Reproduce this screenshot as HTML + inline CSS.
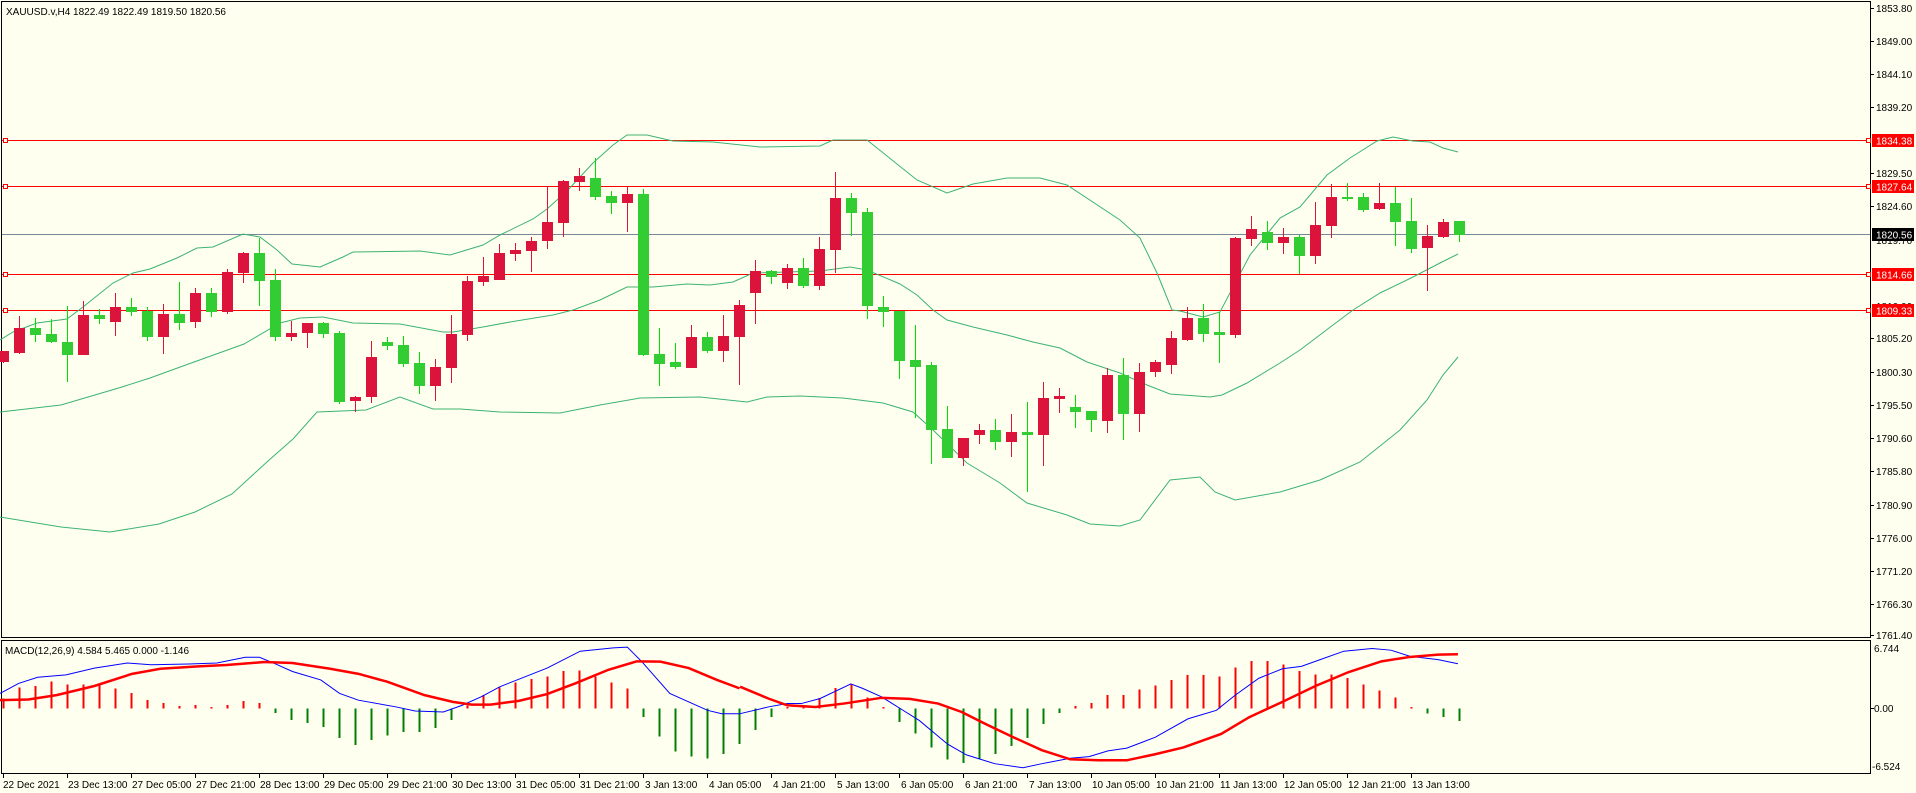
<!DOCTYPE html>
<html><head><meta charset="utf-8"><style>
html,body{margin:0;padding:0;background:#fffff0;width:1916px;height:793px;overflow:hidden}
svg{display:block}
text{font-family:"Liberation Sans",sans-serif;font-size:10px;fill:#000}
.r{fill:#dc143c}.g{fill:#32cd32}
.rw{stroke:#dc143c}.gw{stroke:#00e000}
</style></head><body>
<svg width="1916" height="793" viewBox="0 0 1916 793" xmlns="http://www.w3.org/2000/svg">
<rect width="1916" height="793" fill="#fffff0"/>
<g stroke="#000" stroke-width="1" fill="none" shape-rendering="crispEdges">
<rect x="1.5" y="1.5" width="1869" height="636"/>
<rect x="1.5" y="640.5" width="1869" height="133"/>
</g>
<g stroke="#ff0000" stroke-width="1" shape-rendering="crispEdges">
<line x1="2" x2="1870" y1="140.5" y2="140.5"/>
<line x1="2" x2="1870" y1="186.5" y2="186.5"/>
<line x1="2" x2="1870" y1="274.5" y2="274.5"/>
<line x1="2" x2="1870" y1="310.5" y2="310.5"/>
</g>
<line x1="2" x2="1870" y1="234.5" y2="234.5" stroke="#778899" shape-rendering="crispEdges"/>
<g stroke="#ff0000" fill="#fffff0" shape-rendering="crispEdges">
<rect x="3.5" y="138.5" width="4" height="4"/><rect x="3.5" y="184.5" width="4" height="4"/><rect x="3.5" y="272.5" width="4" height="4"/><rect x="3.5" y="308.5" width="4" height="4"/>
<rect x="1866.5" y="138.5" width="4" height="4"/><rect x="1866.5" y="184.5" width="4" height="4"/><rect x="1866.5" y="272.5" width="4" height="4"/><rect x="1866.5" y="308.5" width="4" height="4"/>
</g>
<g fill="none" stroke="#3cb371" stroke-width="1">
<polyline points="0,340 13,332 37,323 67,319 83,307 113,283 133,273 150,269 177,258 197,248 213,247 243,234 260,237 277,250 292,264 320,267 343,257 353,252 420,251 450,255 483,245 500,235 533,219 547,209 567,191 593,163 613,145 627,135 647,135 673,141 713,142 760,147 820,146 833,140 867,140 917,180 947,193 973,184 1007,178 1040,178 1067,185 1120,220 1140,238 1157,273 1172,310 1180,311 1203,317 1220,312 1250,255 1280,218 1300,207 1327,175 1350,158 1377,141 1393,137 1413,141 1430,142 1443,148 1458,152"/>
<polyline points="0,412 61,405 122,387 150,378 183,366 244,344 280,323 300,318 323,317 353,323 400,324 443,332 453,332 483,327 510,322 553,315 573,310 600,300 627,287 653,287 687,284 710,285 733,282 753,273 820,271 850,267 867,270 900,284 917,295 933,310 947,320 973,327 1007,335 1033,342 1060,348 1087,362 1120,373 1147,385 1170,394 1210,397 1222,395 1247,383 1280,363 1300,350 1333,325 1353,310 1380,293 1413,277 1440,263 1458,254"/>
<polyline points="0,517 61,527 110,532 159,524 195,512 232,494 268,461 293,439 317,412 366,410 400,397 433,409 460,409 500,412 560,413 600,405 640,398 700,397 747,402 767,397 800,396 843,398 883,403 913,412 933,430 967,463 1000,483 1027,503 1067,515 1090,524 1120,526 1140,520 1170,480 1200,477 1215,492 1235,500 1280,492 1320,480 1360,462 1400,430 1427,400 1443,375 1458,357"/>
</g>
<g shape-rendering="crispEdges">
<line class="rw" x1="3.5" x2="3.5" y1="351" y2="363"/><rect class="r" x="0" y="351" width="9" height="11"/>
<line class="rw" x1="19.5" x2="19.5" y1="316" y2="354"/><rect class="r" x="14" y="328" width="11" height="25"/>
<line class="gw" x1="35.5" x2="35.5" y1="318" y2="342"/><rect class="g" x="30" y="328" width="11" height="7"/>
<line class="gw" x1="51.5" x2="51.5" y1="319" y2="343"/><rect class="g" x="46" y="334" width="11" height="8"/>
<line class="gw" x1="67.5" x2="67.5" y1="306" y2="382"/><rect class="g" x="62" y="342" width="11" height="13"/>
<line class="rw" x1="83.5" x2="83.5" y1="301" y2="355"/><rect class="r" x="78" y="315" width="11" height="40"/>
<line class="gw" x1="99.5" x2="99.5" y1="309" y2="324"/><rect class="g" x="94" y="315" width="11" height="4"/>
<line class="rw" x1="115.5" x2="115.5" y1="293" y2="336"/><rect class="r" x="110" y="307" width="11" height="15"/>
<line class="gw" x1="131.5" x2="131.5" y1="298" y2="316"/><rect class="g" x="126" y="307" width="11" height="5"/>
<line class="gw" x1="147.5" x2="147.5" y1="307" y2="341"/><rect class="g" x="142" y="311" width="11" height="26"/>
<line class="rw" x1="163.5" x2="163.5" y1="304" y2="354"/><rect class="r" x="158" y="314" width="11" height="23"/>
<line class="gw" x1="179.5" x2="179.5" y1="282" y2="330"/><rect class="g" x="174" y="314" width="11" height="9"/>
<line class="rw" x1="195.5" x2="195.5" y1="288" y2="328"/><rect class="r" x="190" y="293" width="11" height="29"/>
<line class="gw" x1="211.5" x2="211.5" y1="288" y2="317"/><rect class="g" x="206" y="293" width="11" height="19"/>
<line class="rw" x1="227.5" x2="227.5" y1="269" y2="314"/><rect class="r" x="222" y="272" width="11" height="40"/>
<line class="rw" x1="243.5" x2="243.5" y1="252" y2="283"/><rect class="r" x="238" y="253" width="11" height="20"/>
<line class="gw" x1="259.5" x2="259.5" y1="238" y2="306"/><rect class="g" x="254" y="253" width="11" height="28"/>
<line class="gw" x1="275.5" x2="275.5" y1="269" y2="341"/><rect class="g" x="270" y="280" width="11" height="57"/>
<line class="rw" x1="291.5" x2="291.5" y1="321" y2="341"/><rect class="r" x="286" y="333" width="11" height="4"/>
<line class="rw" x1="307.5" x2="307.5" y1="323" y2="348"/><rect class="r" x="302" y="323" width="11" height="10"/>
<line class="gw" x1="323.5" x2="323.5" y1="322" y2="338"/><rect class="g" x="318" y="323" width="11" height="11"/>
<line class="gw" x1="339.5" x2="339.5" y1="331" y2="404"/><rect class="g" x="334" y="333" width="11" height="69"/>
<line class="rw" x1="355.5" x2="355.5" y1="396" y2="412"/><rect class="r" x="350" y="397" width="11" height="4"/>
<line class="rw" x1="371.5" x2="371.5" y1="341" y2="403"/><rect class="r" x="366" y="357" width="11" height="40"/>
<line class="gw" x1="387.5" x2="387.5" y1="337" y2="350"/><rect class="g" x="382" y="342" width="11" height="4"/>
<line class="gw" x1="403.5" x2="403.5" y1="336" y2="367"/><rect class="g" x="398" y="345" width="11" height="19"/>
<line class="gw" x1="419.5" x2="419.5" y1="352" y2="394"/><rect class="g" x="414" y="363" width="11" height="23"/>
<line class="rw" x1="435.5" x2="435.5" y1="359" y2="401"/><rect class="r" x="430" y="367" width="11" height="19"/>
<line class="rw" x1="451.5" x2="451.5" y1="315" y2="383"/><rect class="r" x="446" y="334" width="11" height="34"/>
<line class="rw" x1="467.5" x2="467.5" y1="276" y2="341"/><rect class="r" x="462" y="281" width="11" height="54"/>
<line class="rw" x1="483.5" x2="483.5" y1="257" y2="286"/><rect class="r" x="478" y="276" width="11" height="6"/>
<line class="rw" x1="499.5" x2="499.5" y1="244" y2="280"/><rect class="r" x="494" y="253" width="11" height="27"/>
<line class="rw" x1="515.5" x2="515.5" y1="243" y2="261"/><rect class="r" x="510" y="250" width="11" height="4"/>
<line class="rw" x1="531.5" x2="531.5" y1="237" y2="272"/><rect class="r" x="526" y="241" width="11" height="10"/>
<line class="rw" x1="547.5" x2="547.5" y1="187" y2="249"/><rect class="r" x="542" y="222" width="11" height="19"/>
<line class="rw" x1="563.5" x2="563.5" y1="180" y2="237"/><rect class="r" x="558" y="181" width="11" height="42"/>
<line class="rw" x1="579.5" x2="579.5" y1="168" y2="191"/><rect class="r" x="574" y="176" width="11" height="6"/>
<line class="gw" x1="595.5" x2="595.5" y1="158" y2="200"/><rect class="g" x="590" y="178" width="11" height="19"/>
<line class="gw" x1="611.5" x2="611.5" y1="191" y2="214"/><rect class="g" x="606" y="196" width="11" height="7"/>
<line class="rw" x1="627.5" x2="627.5" y1="187" y2="232"/><rect class="r" x="622" y="194" width="11" height="9"/>
<line class="gw" x1="643.5" x2="643.5" y1="189" y2="356"/><rect class="g" x="638" y="194" width="11" height="161"/>
<line class="gw" x1="659.5" x2="659.5" y1="328" y2="386"/><rect class="g" x="654" y="354" width="11" height="10"/>
<line class="gw" x1="675.5" x2="675.5" y1="343" y2="369"/><rect class="g" x="670" y="362" width="11" height="5"/>
<line class="rw" x1="691.5" x2="691.5" y1="325" y2="368"/><rect class="r" x="686" y="337" width="11" height="31"/>
<line class="gw" x1="707.5" x2="707.5" y1="332" y2="353"/><rect class="g" x="702" y="337" width="11" height="14"/>
<line class="rw" x1="723.5" x2="723.5" y1="315" y2="362"/><rect class="r" x="718" y="336" width="11" height="15"/>
<line class="rw" x1="739.5" x2="739.5" y1="300" y2="385"/><rect class="r" x="734" y="305" width="11" height="32"/>
<line class="rw" x1="755.5" x2="755.5" y1="260" y2="324"/><rect class="r" x="750" y="271" width="11" height="22"/>
<line class="gw" x1="771.5" x2="771.5" y1="270" y2="284"/><rect class="g" x="766" y="271" width="11" height="6"/>
<line class="rw" x1="787.5" x2="787.5" y1="264" y2="289"/><rect class="r" x="782" y="268" width="11" height="15"/>
<line class="gw" x1="803.5" x2="803.5" y1="258" y2="288"/><rect class="g" x="798" y="268" width="11" height="18"/>
<line class="rw" x1="819.5" x2="819.5" y1="237" y2="290"/><rect class="r" x="814" y="249" width="11" height="37"/>
<line class="rw" x1="835.5" x2="835.5" y1="172" y2="273"/><rect class="r" x="830" y="198" width="11" height="52"/>
<line class="gw" x1="851.5" x2="851.5" y1="193" y2="236"/><rect class="g" x="846" y="198" width="11" height="15"/>
<line class="gw" x1="867.5" x2="867.5" y1="208" y2="319"/><rect class="g" x="862" y="212" width="11" height="94"/>
<line class="gw" x1="883.5" x2="883.5" y1="296" y2="327"/><rect class="g" x="878" y="307" width="11" height="5"/>
<line class="gw" x1="899.5" x2="899.5" y1="311" y2="379"/><rect class="g" x="894" y="311" width="11" height="50"/>
<line class="gw" x1="915.5" x2="915.5" y1="325" y2="418"/><rect class="g" x="910" y="360" width="11" height="7"/>
<line class="gw" x1="931.5" x2="931.5" y1="362" y2="464"/><rect class="g" x="926" y="365" width="11" height="65"/>
<line class="gw" x1="947.5" x2="947.5" y1="406" y2="458"/><rect class="g" x="942" y="429" width="11" height="29"/>
<line class="rw" x1="963.5" x2="963.5" y1="438" y2="466"/><rect class="r" x="958" y="438" width="11" height="20"/>
<line class="rw" x1="979.5" x2="979.5" y1="424" y2="444"/><rect class="r" x="974" y="430" width="11" height="5"/>
<line class="gw" x1="995.5" x2="995.5" y1="419" y2="450"/><rect class="g" x="990" y="430" width="11" height="12"/>
<line class="rw" x1="1011.5" x2="1011.5" y1="414" y2="457"/><rect class="r" x="1006" y="432" width="11" height="10"/>
<line class="gw" x1="1027.5" x2="1027.5" y1="402" y2="492"/><rect class="g" x="1022" y="432" width="11" height="3"/>
<line class="rw" x1="1043.5" x2="1043.5" y1="382" y2="466"/><rect class="r" x="1038" y="398" width="11" height="37"/>
<line class="rw" x1="1059.5" x2="1059.5" y1="388" y2="413"/><rect class="r" x="1054" y="396" width="11" height="3"/>
<line class="gw" x1="1075.5" x2="1075.5" y1="395" y2="428"/><rect class="g" x="1070" y="407" width="11" height="5"/>
<line class="gw" x1="1091.5" x2="1091.5" y1="411" y2="432"/><rect class="g" x="1086" y="411" width="11" height="9"/>
<line class="rw" x1="1107.5" x2="1107.5" y1="368" y2="433"/><rect class="r" x="1102" y="375" width="11" height="46"/>
<line class="gw" x1="1123.5" x2="1123.5" y1="358" y2="440"/><rect class="g" x="1118" y="375" width="11" height="39"/>
<line class="rw" x1="1139.5" x2="1139.5" y1="363" y2="432"/><rect class="r" x="1134" y="372" width="11" height="42"/>
<line class="rw" x1="1155.5" x2="1155.5" y1="360" y2="377"/><rect class="r" x="1150" y="362" width="11" height="10"/>
<line class="rw" x1="1171.5" x2="1171.5" y1="331" y2="374"/><rect class="r" x="1166" y="338" width="11" height="27"/>
<line class="rw" x1="1187.5" x2="1187.5" y1="307" y2="341"/><rect class="r" x="1182" y="318" width="11" height="22"/>
<line class="gw" x1="1203.5" x2="1203.5" y1="304" y2="342"/><rect class="g" x="1198" y="318" width="11" height="16"/>
<line class="gw" x1="1219.5" x2="1219.5" y1="312" y2="363"/><rect class="g" x="1214" y="332" width="11" height="3"/>
<line class="rw" x1="1235.5" x2="1235.5" y1="237" y2="338"/><rect class="r" x="1230" y="238" width="11" height="97"/>
<line class="rw" x1="1251.5" x2="1251.5" y1="216" y2="246"/><rect class="r" x="1246" y="229" width="11" height="10"/>
<line class="gw" x1="1267.5" x2="1267.5" y1="221" y2="250"/><rect class="g" x="1262" y="232" width="11" height="11"/>
<line class="rw" x1="1283.5" x2="1283.5" y1="228" y2="254"/><rect class="r" x="1278" y="237" width="11" height="6"/>
<line class="gw" x1="1299.5" x2="1299.5" y1="235" y2="274"/><rect class="g" x="1294" y="237" width="11" height="19"/>
<line class="rw" x1="1315.5" x2="1315.5" y1="202" y2="264"/><rect class="r" x="1310" y="225" width="11" height="31"/>
<line class="rw" x1="1331.5" x2="1331.5" y1="184" y2="238"/><rect class="r" x="1326" y="197" width="11" height="29"/>
<line class="gw" x1="1347.5" x2="1347.5" y1="183" y2="201"/><rect class="g" x="1342" y="197" width="11" height="2"/>
<line class="gw" x1="1363.5" x2="1363.5" y1="193" y2="212"/><rect class="g" x="1358" y="197" width="11" height="13"/>
<line class="rw" x1="1379.5" x2="1379.5" y1="183" y2="210"/><rect class="r" x="1374" y="203" width="11" height="6"/>
<line class="gw" x1="1395.5" x2="1395.5" y1="187" y2="246"/><rect class="g" x="1390" y="203" width="11" height="19"/>
<line class="gw" x1="1411.5" x2="1411.5" y1="198" y2="253"/><rect class="g" x="1406" y="221" width="11" height="28"/>
<line class="rw" x1="1427.5" x2="1427.5" y1="225" y2="291"/><rect class="r" x="1422" y="236" width="11" height="12"/>
<line class="rw" x1="1443.5" x2="1443.5" y1="219" y2="238"/><rect class="r" x="1438" y="222" width="11" height="15"/>
<line class="gw" x1="1459.5" x2="1459.5" y1="221" y2="242"/><rect class="g" x="1454" y="221" width="11" height="14"/>
</g>
<g stroke-width="2" shape-rendering="crispEdges">
<g stroke="#ff0000">
<line x1="3.5" x2="3.5" y1="708.5" y2="698.5"/><line x1="19.5" x2="19.5" y1="708.5" y2="687.4"/><line x1="35.5" x2="35.5" y1="708.5" y2="686"/><line x1="51.5" x2="51.5" y1="708.5" y2="681.6"/><line x1="67.5" x2="67.5" y1="708.5" y2="684.6"/><line x1="83.5" x2="83.5" y1="708.5" y2="684.6"/><line x1="99.5" x2="99.5" y1="708.5" y2="685"/><line x1="115.5" x2="115.5" y1="708.5" y2="688.7"/><line x1="131.5" x2="131.5" y1="708.5" y2="692.8"/><line x1="147.5" x2="147.5" y1="708.5" y2="699.9"/><line x1="163.5" x2="163.5" y1="708.5" y2="702.9"/><line x1="179.5" x2="179.5" y1="708.5" y2="705.9"/><line x1="195.5" x2="195.5" y1="708.5" y2="704.9"/><line x1="211.5" x2="211.5" y1="708.5" y2="707"/><line x1="227.5" x2="227.5" y1="708.5" y2="704.9"/><line x1="243.5" x2="243.5" y1="708.5" y2="700.9"/><line x1="259.5" x2="259.5" y1="708.5" y2="702.9"/>
<line x1="467.5" x2="467.5" y1="708.5" y2="705.3"/><line x1="483.5" x2="483.5" y1="708.5" y2="695.1"/><line x1="499.5" x2="499.5" y1="708.5" y2="687.4"/><line x1="515.5" x2="515.5" y1="708.5" y2="682.3"/><line x1="531.5" x2="531.5" y1="708.5" y2="678.9"/><line x1="547.5" x2="547.5" y1="708.5" y2="676.5"/><line x1="563.5" x2="563.5" y1="708.5" y2="671.1"/><line x1="579.5" x2="579.5" y1="708.5" y2="670.5"/><line x1="595.5" x2="595.5" y1="708.5" y2="676.5"/><line x1="611.5" x2="611.5" y1="708.5" y2="682.3"/><line x1="627.5" x2="627.5" y1="708.5" y2="688.7"/>
<line x1="787.5" x2="787.5" y1="708.5" y2="706.9"/><line x1="803.5" x2="803.5" y1="708.5" y2="705.6"/><line x1="819.5" x2="819.5" y1="708.5" y2="698.2"/><line x1="835.5" x2="835.5" y1="708.5" y2="688"/><line x1="851.5" x2="851.5" y1="708.5" y2="684"/><line x1="867.5" x2="867.5" y1="708.5" y2="697.5"/><line x1="883.5" x2="883.5" y1="708.5" y2="706.9"/>
<line x1="1075.5" x2="1075.5" y1="708.5" y2="705.9"/><line x1="1091.5" x2="1091.5" y1="708.5" y2="702.9"/><line x1="1107.5" x2="1107.5" y1="708.5" y2="694.8"/><line x1="1123.5" x2="1123.5" y1="708.5" y2="694.8"/><line x1="1139.5" x2="1139.5" y1="708.5" y2="689.4"/><line x1="1155.5" x2="1155.5" y1="708.5" y2="685.7"/><line x1="1171.5" x2="1171.5" y1="708.5" y2="679.9"/><line x1="1187.5" x2="1187.5" y1="708.5" y2="675.2"/><line x1="1203.5" x2="1203.5" y1="708.5" y2="675.2"/><line x1="1219.5" x2="1219.5" y1="708.5" y2="676.5"/><line x1="1235.5" x2="1235.5" y1="708.5" y2="667.4"/><line x1="1251.5" x2="1251.5" y1="708.5" y2="661"/><line x1="1267.5" x2="1267.5" y1="708.5" y2="661"/><line x1="1283.5" x2="1283.5" y1="708.5" y2="664.4"/><line x1="1299.5" x2="1299.5" y1="708.5" y2="671.1"/><line x1="1315.5" x2="1315.5" y1="708.5" y2="674.5"/><line x1="1331.5" x2="1331.5" y1="708.5" y2="674.5"/><line x1="1347.5" x2="1347.5" y1="708.5" y2="678.2"/><line x1="1363.5" x2="1363.5" y1="708.5" y2="684.6"/><line x1="1379.5" x2="1379.5" y1="708.5" y2="690.7"/><line x1="1395.5" x2="1395.5" y1="708.5" y2="697.5"/><line x1="1411.5" x2="1411.5" y1="708.5" y2="706.9"/>
</g>
<g stroke="#008000">
<line x1="275.5" x2="275.5" y1="708.5" y2="713"/><line x1="291.5" x2="291.5" y1="708.5" y2="719.8"/><line x1="307.5" x2="307.5" y1="708.5" y2="723.2"/><line x1="323.5" x2="323.5" y1="708.5" y2="727.2"/><line x1="339.5" x2="339.5" y1="708.5" y2="738"/><line x1="355.5" x2="355.5" y1="708.5" y2="745.1"/><line x1="371.5" x2="371.5" y1="708.5" y2="740"/><line x1="387.5" x2="387.5" y1="708.5" y2="735.3"/><line x1="403.5" x2="403.5" y1="708.5" y2="731.9"/><line x1="419.5" x2="419.5" y1="708.5" y2="731.9"/><line x1="435.5" x2="435.5" y1="708.5" y2="727.9"/><line x1="451.5" x2="451.5" y1="708.5" y2="719.8"/>
<line x1="643.5" x2="643.5" y1="708.5" y2="717.1"/><line x1="659.5" x2="659.5" y1="708.5" y2="736.7"/><line x1="675.5" x2="675.5" y1="708.5" y2="751.5"/><line x1="691.5" x2="691.5" y1="708.5" y2="756.3"/><line x1="707.5" x2="707.5" y1="708.5" y2="758.3"/><line x1="723.5" x2="723.5" y1="708.5" y2="754.2"/><line x1="739.5" x2="739.5" y1="708.5" y2="744.1"/><line x1="755.5" x2="755.5" y1="708.5" y2="729.9"/><line x1="771.5" x2="771.5" y1="708.5" y2="717.1"/>
<line x1="899.5" x2="899.5" y1="708.5" y2="721.8"/><line x1="915.5" x2="915.5" y1="708.5" y2="733.3"/><line x1="931.5" x2="931.5" y1="708.5" y2="747.5"/><line x1="947.5" x2="947.5" y1="708.5" y2="759.6"/><line x1="963.5" x2="963.5" y1="708.5" y2="763"/><line x1="979.5" x2="979.5" y1="708.5" y2="759"/><line x1="995.5" x2="995.5" y1="708.5" y2="754.2"/><line x1="1011.5" x2="1011.5" y1="708.5" y2="746.1"/><line x1="1027.5" x2="1027.5" y1="708.5" y2="738"/><line x1="1043.5" x2="1043.5" y1="708.5" y2="723.8"/><line x1="1059.5" x2="1059.5" y1="708.5" y2="713"/>
<line x1="1427.5" x2="1427.5" y1="708.5" y2="713.7"/><line x1="1443.5" x2="1443.5" y1="708.5" y2="717.1"/><line x1="1459.5" x2="1459.5" y1="708.5" y2="721.1"/>
</g>
</g>
<g fill="none" transform="translate(0,636) scale(0.4717,0.3378)">
<polyline vector-effect="non-scaling-stroke" stroke="#0000ff" stroke-width="1" points="0,170 40,140 80,122 140,115 200,95 270,80 320,85 400,83 460,80 520,63 550,63 580,80 620,105 680,130 720,170 760,190 840,210 880,222 940,225 980,205 1020,180 1060,150 1160,95 1230,45 1300,35 1330,33 1360,75 1420,170 1500,220 1530,230 1568,230"/>
<polyline vector-effect="non-scaling-stroke" stroke="#ff0000" stroke-width="2.5" points="0,190 60,188 120,175 200,148 280,112 340,97 420,90 480,86 560,77 620,80 700,97 760,112 820,135 900,175 960,195 1000,203 1040,203 1100,192 1160,172 1220,140 1290,100 1350,75 1400,76 1460,95 1520,130 1568,155"/>
</g>
<g fill="none" transform="translate(740,636) scale(0.4717,0.3378)">
<polyline vector-effect="non-scaling-stroke" stroke="#0000ff" stroke-width="1" points="0,230 60,210 100,200 130,200 170,185 235,142 260,155 300,180 340,215 380,250 440,320 480,352 540,378 600,390 640,378 700,362 740,357 780,340 820,332 880,300 950,245 1010,220 1050,175 1100,125 1150,97 1190,90 1230,70 1280,45 1340,37 1380,42 1420,60 1480,70 1522,82"/>
<polyline vector-effect="non-scaling-stroke" stroke="#ff0000" stroke-width="2.5" points="0,150 60,185 100,205 160,210 220,200 300,183 360,186 420,200 470,225 520,260 580,300 640,338 700,365 760,368 820,368 880,350 940,330 1020,290 1080,240 1150,195 1220,148 1290,107 1360,75 1420,62 1480,55 1522,54"/>
</g>
<text x="6" y="15">XAUUSD.v,H4  1822.49 1822.49 1819.50 1820.56</text>
<text x="5" y="654">MACD(12,26,9) 4.584 5.465 0.000 -1.146</text>
<g stroke="#000" shape-rendering="crispEdges">
<line x1="1870" x2="1874" y1="8.5" y2="8.5"/><line x1="1870" x2="1874" y1="41.5" y2="41.5"/><line x1="1870" x2="1874" y1="74.5" y2="74.5"/><line x1="1870" x2="1874" y1="107.5" y2="107.5"/><line x1="1870" x2="1874" y1="173.5" y2="173.5"/><line x1="1870" x2="1874" y1="206.5" y2="206.5"/><line x1="1870" x2="1874" y1="338.5" y2="338.5"/><line x1="1870" x2="1874" y1="372.5" y2="372.5"/><line x1="1870" x2="1874" y1="405.5" y2="405.5"/><line x1="1870" x2="1874" y1="438.5" y2="438.5"/><line x1="1870" x2="1874" y1="471.5" y2="471.5"/><line x1="1870" x2="1874" y1="505.5" y2="505.5"/><line x1="1870" x2="1874" y1="538.5" y2="538.5"/><line x1="1870" x2="1874" y1="571.5" y2="571.5"/><line x1="1870" x2="1874" y1="604.5" y2="604.5"/><line x1="1870" x2="1874" y1="635.5" y2="635.5"/>
<line x1="1870" x2="1874" y1="708.5" y2="708.5"/>
</g>
<g>
<text x="1876" y="12">1853.80</text><text x="1876" y="45">1849.00</text><text x="1876" y="78">1844.10</text><text x="1876" y="111">1839.20</text><text x="1876" y="177">1829.50</text><text x="1876" y="210">1824.60</text><text x="1876" y="244">1819.70</text><text x="1876" y="277">1814.80</text><text x="1876" y="310">1810.00</text><text x="1876" y="342">1805.20</text><text x="1876" y="376">1800.30</text><text x="1876" y="409">1795.50</text><text x="1876" y="442">1790.60</text><text x="1876" y="475">1785.80</text><text x="1876" y="509">1780.90</text><text x="1876" y="542">1776.00</text><text x="1876" y="575">1771.20</text><text x="1876" y="608">1766.30</text><text x="1876" y="639">1761.40</text>
<text x="1874" y="652">6.744</text><text x="1874" y="712">0.00</text><text x="1872" y="770">-6.524</text>
</g>
<g>
<rect x="1872" y="134" width="42" height="13" fill="#ff0000"/><text x="1876" y="144.5" style="fill:#fff">1834.38</text>
<rect x="1872" y="180" width="42" height="13" fill="#ff0000"/><text x="1876" y="190.5" style="fill:#fff">1827.64</text>
<rect x="1872" y="228" width="42" height="13" fill="#000"/><text x="1876" y="238.5" style="fill:#fff">1820.56</text>
<rect x="1872" y="268" width="42" height="13" fill="#ff0000"/><text x="1876" y="278.5" style="fill:#fff">1814.66</text>
<rect x="1872" y="304" width="42" height="13" fill="#ff0000"/><text x="1876" y="314.5" style="fill:#fff">1809.33</text>
</g>
<g stroke="#000" shape-rendering="crispEdges">
<line x1="3.5" x2="3.5" y1="774" y2="778"/><line x1="67.5" x2="67.5" y1="774" y2="778"/><line x1="131.5" x2="131.5" y1="774" y2="778"/><line x1="195.5" x2="195.5" y1="774" y2="778"/><line x1="259.5" x2="259.5" y1="774" y2="778"/><line x1="323.5" x2="323.5" y1="774" y2="778"/><line x1="387.5" x2="387.5" y1="774" y2="778"/><line x1="451.5" x2="451.5" y1="774" y2="778"/><line x1="515.5" x2="515.5" y1="774" y2="778"/><line x1="579.5" x2="579.5" y1="774" y2="778"/><line x1="643.5" x2="643.5" y1="774" y2="778"/><line x1="707.5" x2="707.5" y1="774" y2="778"/><line x1="771.5" x2="771.5" y1="774" y2="778"/><line x1="835.5" x2="835.5" y1="774" y2="778"/><line x1="899.5" x2="899.5" y1="774" y2="778"/><line x1="963.5" x2="963.5" y1="774" y2="778"/><line x1="1027.5" x2="1027.5" y1="774" y2="778"/><line x1="1091.5" x2="1091.5" y1="774" y2="778"/><line x1="1155.5" x2="1155.5" y1="774" y2="778"/><line x1="1219.5" x2="1219.5" y1="774" y2="778"/><line x1="1283.5" x2="1283.5" y1="774" y2="778"/><line x1="1347.5" x2="1347.5" y1="774" y2="778"/><line x1="1411.5" x2="1411.5" y1="774" y2="778"/>
</g>
<g>
<text x="3" y="788">22 Dec 2021</text><text x="68" y="788">23 Dec 13:00</text><text x="132" y="788">27 Dec 05:00</text><text x="196" y="788">27 Dec 21:00</text><text x="260" y="788">28 Dec 13:00</text><text x="324" y="788">29 Dec 05:00</text><text x="388" y="788">29 Dec 21:00</text><text x="452" y="788">30 Dec 13:00</text><text x="516" y="788">31 Dec 05:00</text><text x="580" y="788">31 Dec 21:00</text><text x="645" y="788">3 Jan 13:00</text><text x="709" y="788">4 Jan 05:00</text><text x="773" y="788">4 Jan 21:00</text><text x="837" y="788">5 Jan 13:00</text><text x="901" y="788">6 Jan 05:00</text><text x="965" y="788">6 Jan 21:00</text><text x="1029" y="788">7 Jan 13:00</text><text x="1092" y="788">10 Jan 05:00</text><text x="1156" y="788">10 Jan 21:00</text><text x="1220" y="788">11 Jan 13:00</text><text x="1284" y="788">12 Jan 05:00</text><text x="1348" y="788">12 Jan 21:00</text><text x="1412" y="788">13 Jan 13:00</text>
</g>
</svg>
</body></html>
